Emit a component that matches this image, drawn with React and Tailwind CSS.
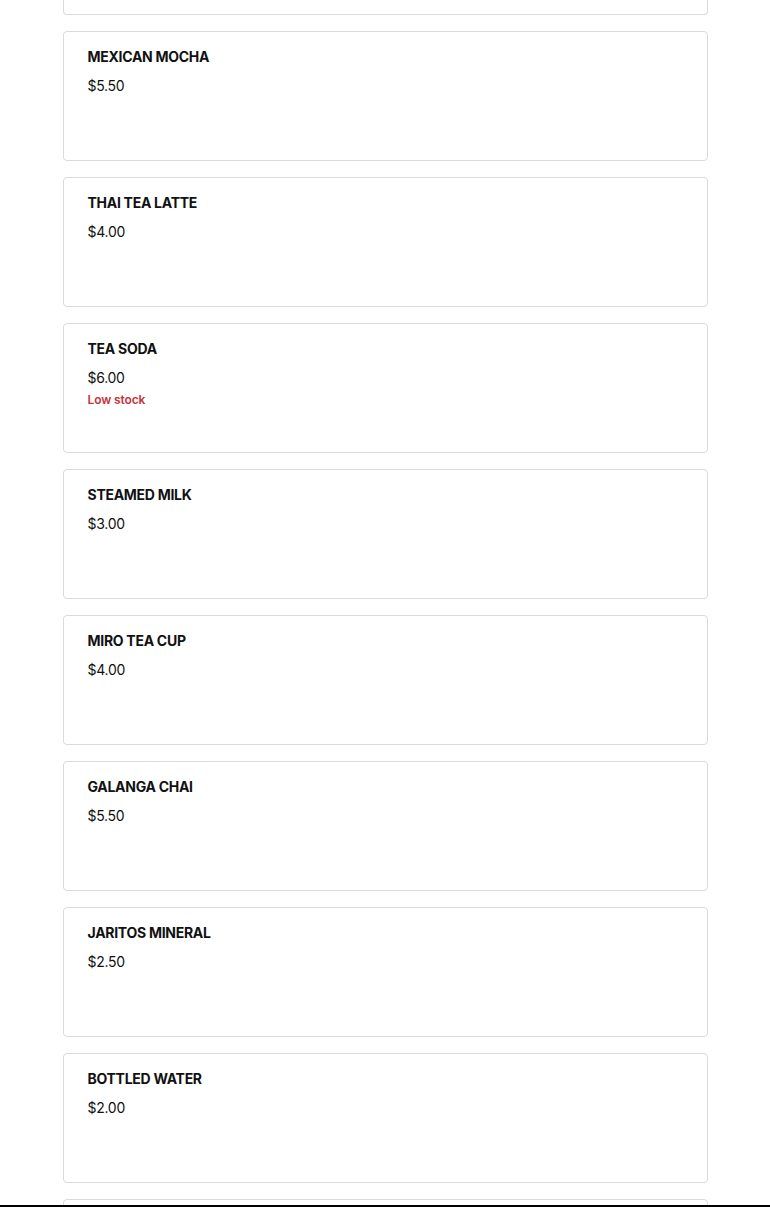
import React from 'react';

const items = [
  { name: 'MEXICAN MOCHA', price: 5.5 },
  { name: 'THAI TEA LATTE', price: 4.0 },
  { name: 'TEA SODA', price: 6.0, lowStock: true },
  { name: 'STEAMED MILK', price: 3.0 },
  { name: 'MIRO TEA CUP', price: 4.0 },
  { name: 'GALANGA CHAI', price: 5.5 },
  { name: 'JARITOS MINERAL', price: 2.5 },
  { name: 'BOTTLED WATER', price: 2.0 },
];

const ItemCard = ({ name, price, lowStock }) => (
  <div className="h-[130px] shrink-0 rounded-[4px] border border-[#dadada] bg-white px-6 pt-[15px]">
    <p className="text-[14px] font-bold leading-[20px] tracking-[-0.02em] text-[#111]">{name}</p>
    <p className="mt-[9px] text-[14px] leading-[20px] tracking-[-0.02em] text-[#111]">${price.toFixed(2)}</p>
    {lowStock && (
      <p className="mt-[4px] text-[12px] font-semibold leading-[16px] tracking-[-0.01em] text-[#c8323a]">Low stock</p>
    )}
  </div>
);

export default function App() {
  return (
    <div
      className="h-[1207px] overflow-hidden bg-white"
      style={{ fontFamily: 'Inter, "Noto Sans", sans-serif' }}
    >
      <div className="mx-auto flex w-[645px] flex-col gap-4">
        {/* tail of the card scrolled above */}
        <div className="h-[15px] shrink-0 rounded-b-[4px] border border-t-0 border-[#dadada]" />
        {items.map((item) => (
          <ItemCard key={item.name} {...item} />
        ))}
        {/* head of the next card */}
        <div className="h-[130px] shrink-0 rounded-[4px] border border-[#dadada]" />
      </div>
      <div className="fixed bottom-0 left-0 h-[2px] w-full bg-black" />
    </div>
  );
}
